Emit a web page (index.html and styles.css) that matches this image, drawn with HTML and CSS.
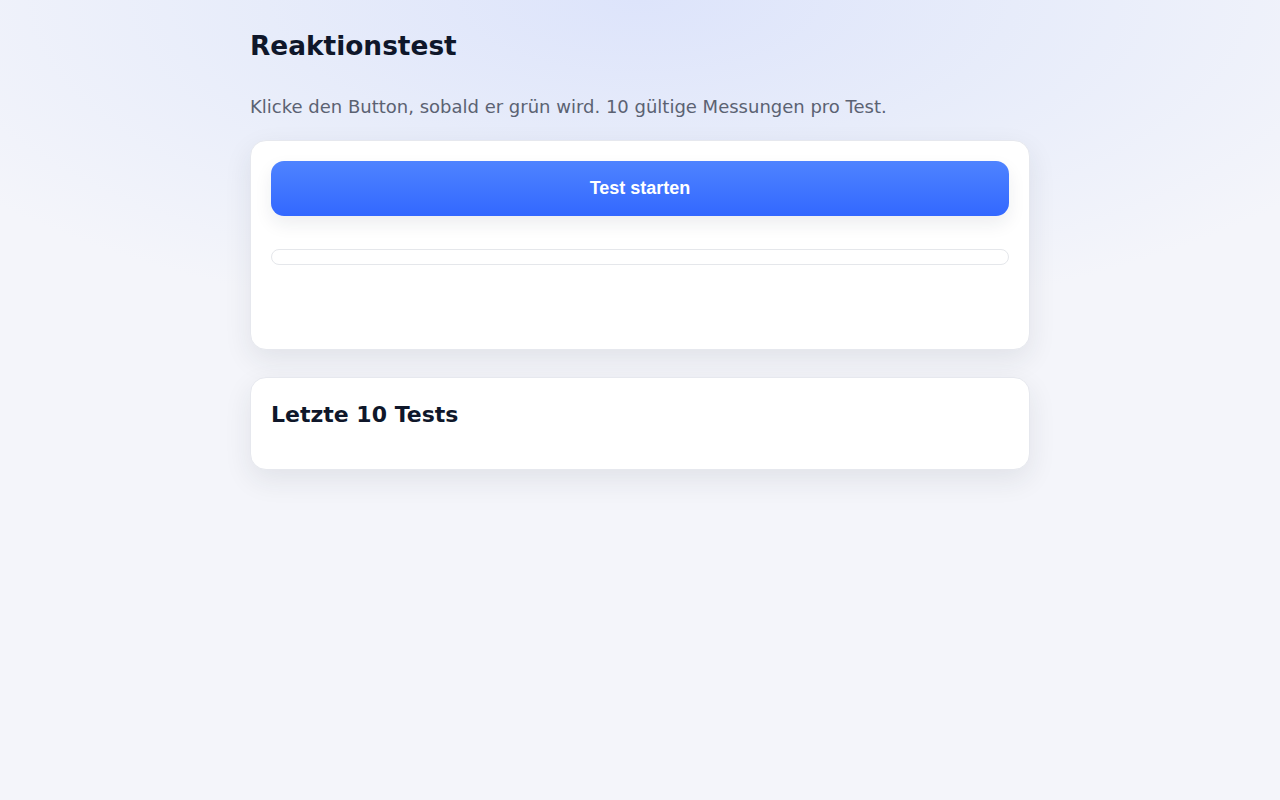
FILE: index.html
```html
<!DOCTYPE html>
<html lang="de">
<head>
<meta charset="utf-8">
<title>Reaktionstest</title>
<link rel="stylesheet" href="styles.css">
</head>
<body>
<main class="wrap">
  <h1 class="title">Reaktionstest</h1>
  <p class="lead">Klicke den Button, sobald er grün wird. 10 gültige Messungen pro Test.</p>
  <section class="card">
    <button class="start-btn" type="button">Test starten</button>
    <div class="progress"><div class="progress-fill"></div></div>
    <div class="result"></div>
  </section>
  <section class="card history">
    <h2 class="history-title">Letzte 10 Tests</h2>
    <ul class="history-list"></ul>
  </section>
</main>
</body>
</html>
```

FILE: styles.css
```css
* { box-sizing: border-box; }
html, body { margin: 0; padding: 0; }
body {
  min-height: 100vh;
  font-family: "DejaVu Sans", sans-serif;
  color: #0f172a;
  background:
    radial-gradient(ellipse 820px 330px at 640px 0px, #dde4fb 0%, rgba(228,234,250,0.75) 50%, rgba(244,246,250,0) 100%),
    #f4f5fa;
}
.wrap {
  width: 780px;
  margin: 0 auto;
  padding: 31px 0 40px;
}
.title {
  margin: 0 0 35px;
  font-size: 26.4px;
  font-weight: 700;
  line-height: 30px;
  color: #0f172a;
}
.lead {
  margin: 0 0 22px;
  font-size: 18px;
  line-height: 22px;
  color: #5b6272;
}
.card {
  background: #fff;
  border: 1px solid #e6e8ee;
  border-radius: 16px;
  padding: 20px 20px 20px;
  box-shadow: 0 10px 28px rgba(30, 41, 59, 0.09);
  margin-bottom: 27px;
}
.start-btn {
  display: block;
  width: 100%;
  height: 55px;
  border: 0;
  border-radius: 13px;
  background: linear-gradient(180deg, #4e83ff 0%, #3368ff 100%);
  color: #fff;
  font-family: "Liberation Sans", Arial, sans-serif;
  font-size: 18px;
  font-weight: 700;
  box-shadow: 0 8px 18px rgba(30, 41, 59, 0.08);
  cursor: pointer;
}
.progress {
  margin-top: 33px;
  height: 16px;
  border: 1px solid #e5e7eb;
  border-radius: 999px;
  background: #fff;
  overflow: hidden;
}
.progress-fill { width: 0; height: 100%; background: #3b82f6; }
.result { min-height: 64px; }
.history { padding-top: 23px; padding-bottom: 20px; }
.history-title {
  margin: 0;
  font-size: 22px;
  line-height: 28px;
  font-weight: 700;
  color: #0f172a;
}
.history-list { margin: 0; padding: 0; list-style: none; min-height: 20px; }
```
